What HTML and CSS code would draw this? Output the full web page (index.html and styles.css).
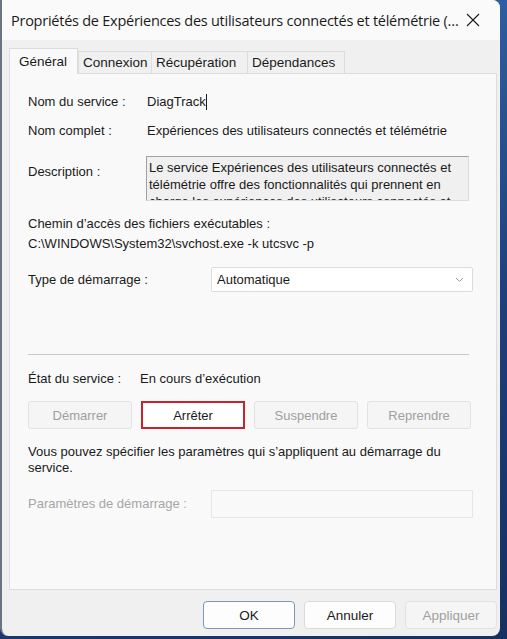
FILE: index.html
```html
<!DOCTYPE html>
<html lang="fr">
<head>
    <meta charset="UTF-8">
    <meta name="viewport" content="width=device-width, initial-scale=1.0">
    <title>Propriétés du service</title>
    <link rel="stylesheet" href="styles.css">
</head>
<body>
    <div class="window">
        <div class="titlebar">
            <span class="title">Propriétés de Expériences des utilisateurs connectés et télémétrie (…</span>
            <span class="close">
                <svg width="14" height="14" viewBox="0 0 14 14"><path d="M1 1 L13 13 M13 1 L1 13" stroke="#1a1a1a" stroke-width="1.1" fill="none"/></svg>
            </span>
        </div>

        <div class="tabs">
            <div class="tab active">Général</div>
            <div class="tab">Connexion</div>
            <div class="tab">Récupération</div>
            <div class="tab">Dépendances</div>
        </div>

        <div class="panel">
            <div class="row row-name">
                <span class="label">Nom du service :</span>
                <span class="value">DiagTrack<span class="caret"></span></span>
            </div>
            <div class="row row-full">
                <span class="label">Nom complet :</span>
                <span class="value">Expériences des utilisateurs connectés et télémétrie</span>
            </div>
            <div class="row row-desc">
                <span class="label">Description :</span>
                <div class="desc-box">Le service Expériences des utilisateurs connectés et télémétrie offre des fonctionnalités qui prennent en charge les expériences des utilisateurs connectés et</div>
            </div>

            <div class="path-label">Chemin d’accès des fichiers exécutables :</div>
            <div class="path">C:\WINDOWS\System32\svchost.exe -k utcsvc -p</div>

            <div class="row row-type">
                <span class="label wide">Type de démarrage :</span>
                <div class="select">
                    <span>Automatique</span>
                    <svg width="9" height="6" viewBox="0 0 9 6"><path d="M1 1 L4.5 4.5 L8 1" stroke="#9a9a9a" stroke-width="1" fill="none"/></svg>
                </div>
            </div>

            <div class="separator"></div>

            <div class="row row-state">
                <span class="label short">État du service :</span>
                <span class="value">En cours d’exécution</span>
            </div>

            <div class="actions">
                <button class="btn" disabled>Démarrer</button>
                <button class="btn btn-marked">Arrêter</button>
                <button class="btn" disabled>Suspendre</button>
                <button class="btn" disabled>Reprendre</button>
            </div>

            <p class="hint">Vous pouvez spécifier les paramètres qui s’appliquent au démarrage du service.</p>

            <div class="row row-params">
                <span class="label wide muted">Paramètres de démarrage :</span>
                <div class="input"></div>
            </div>
        </div>

        <div class="footer">
            <button class="btn btn-default">OK</button>
            <button class="btn btn-normal">Annuler</button>
            <button class="btn" disabled>Appliquer</button>
        </div>
    </div>
</body>
</html>
```

FILE: styles.css
```css
body {
    margin: 0;
    padding: 0;
    background: linear-gradient(160deg, #3a6fb8 0%, #1d3f7a 60%, #17305f 100%);
    font-family: "Liberation Sans", Arial, sans-serif;
    font-size: 13px;
    color: #1a1a1a;
    height: 639px;
    overflow: hidden;
}

.window {
    width: 500px;
    height: 636px;
    background-color: #f0f0f0;
    border-radius: 0 8px 8px 8px;
    display: flex;
    flex-direction: column;
    overflow: hidden;
    box-sizing: border-box;
    border-left: 2px solid #6a7484;
}

.titlebar {
    height: 40px;
    background-color: #fafafa;
    display: flex;
    align-items: center;
    padding-left: 9px;
    flex-shrink: 0;
}

.title {
    font-family: "Open Sans", "Noto Sans", sans-serif;
    font-size: 14.5px;
    letter-spacing: -0.25px;
    color: #1a1a1a;
    white-space: nowrap;
}

.close {
    margin-left: auto;
    width: 46px;
    display: flex;
    justify-content: center;
    padding-right: 12px;
}

.close svg {
    display: block;
}

.tabs {
    display: flex;
    align-items: flex-end;
    height: 26px;
    margin: 7px 0 0 7px;
    position: relative;
    z-index: 1;
}

.tab {
    height: 21px;
    line-height: 22px;
    padding: 0 4px;
    border: 1px solid #dcdcdc;
    border-bottom: none;
    background-color: #f0f0f0;
    margin-left: -1px;
    font-size: 13.5px;
}

.tab.active {
    height: 25px;
    line-height: 25px;
    padding: 0 10px 0 9px;
    background-color: #f9f9f9;
    margin-left: 0;
    margin-bottom: -1px;
    margin-right: 1px;
}

.tab:nth-child(2) { width: 64px; }
.tab:nth-child(3) { width: 87px; }
.tab:nth-child(4) { width: 88px; }

.panel {
    margin: 0 3px 0 7px;
    height: 517px;
    background-color: #f9f9f9;
    border: 1px solid #dcdcdc;
    padding: 20px 0 0 18px;
    box-sizing: border-box;
    flex-shrink: 0;
}

.row {
    display: flex;
    align-items: center;
    line-height: 16px;
}

.label {
    width: 119px;
    flex-shrink: 0;
}

.label.wide {
    width: 183px;
}

.label.short {
    width: 112px;
}

.muted {
    color: #a6a6a6;
}

.caret {
    display: inline-block;
    width: 1px;
    height: 16px;
    background-color: #1a1a1a;
    vertical-align: top;
}

.row-full {
    margin-top: 13px;
}

.row-desc {
    margin-top: 17px;
    align-items: flex-start;
}

.row-desc .label {
    padding-top: 8px;
}

.desc-box {
    width: 323px;
    height: 45px;
    margin-left: -1px;
    padding: 2px 0 0 2px;
    box-sizing: border-box;
    background-color: #f0f0f0;
    border: 1px solid;
    border-color: #a0a0a0 #dcdcdc #dcdcdc #a0a0a0;
    line-height: 17px;
    overflow: hidden;
}

.path-label {
    margin-top: 15px;
    line-height: 16px;
}

.path {
    margin-top: 4px;
    line-height: 16px;
}

.row-type {
    margin-top: 15px;
}

.select {
    width: 262px;
    height: 25px;
    box-sizing: border-box;
    background-color: #ffffff;
    border: 1px solid #dcdcdc;
    border-radius: 2px;
    display: flex;
    align-items: center;
    justify-content: space-between;
    padding: 0 8px 0 5px;
}

.separator {
    width: 441px;
    height: 1px;
    margin-top: 62px;
    background-color: #c8c8c8;
}

.row-state {
    margin-top: 16px;
}

.actions {
    display: grid;
    grid-template-columns: repeat(4, 104px);
    gap: 9px;
    margin-top: 14px;
}

.btn {
    height: 28px;
    font-family: "Liberation Sans", Arial, sans-serif;
    font-size: 13px;
    color: #1a1a1a;
    background-color: #fdfdfd;
    border: 1px solid #d0d0d0;
    border-radius: 3px;
    padding: 0;
}

.btn:disabled {
    color: #a0a0a0;
    background-color: #f5f5f5;
    border-color: #e2e2e2;
}

.btn-marked {
    background-color: #ffffff;
    border: 2px solid #c8232c;
    border-radius: 0;
}

.hint {
    margin: 15px 0 0;
    line-height: 16px;
    width: 440px;
}

.row-params {
    margin-top: 14px;
}

.input {
    width: 262px;
    height: 28px;
    box-sizing: border-box;
    border: 1px solid #e6e6e6;
    background-color: #f9f9f9;
}

.footer {
    display: flex;
    justify-content: flex-end;
    gap: 9px;
    padding: 11px 3px 0 0;
}

.footer .btn {
    width: 92px;
    height: 28px;
    border-radius: 4px;
    font-size: 13.5px;
}

.btn-default {
    border-color: #7c98b8;
}

.btn-normal {
    border-color: #dadada;
}
```
